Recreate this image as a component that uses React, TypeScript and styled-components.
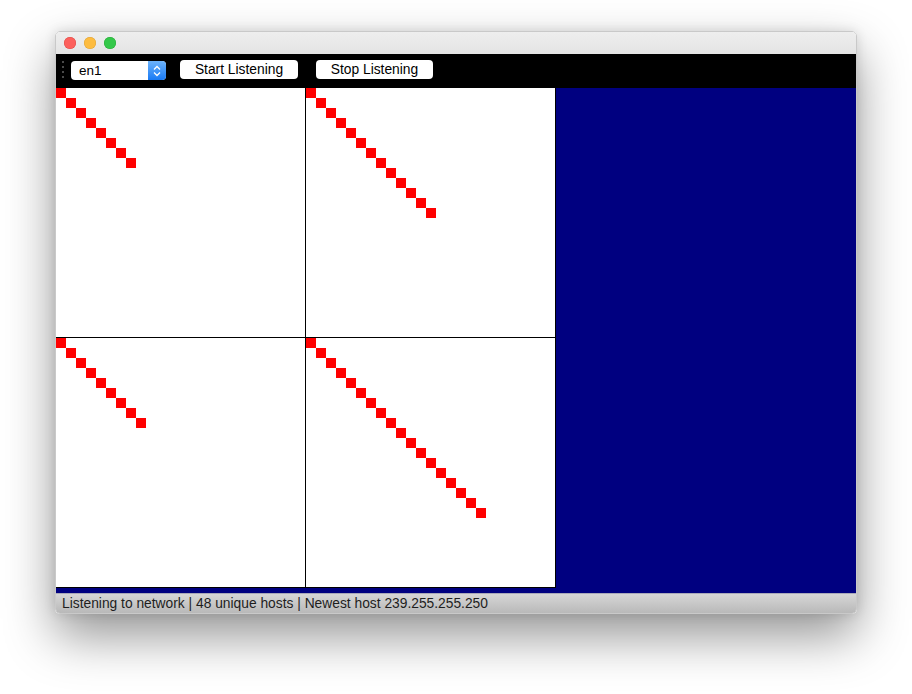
import React from "react";
import styled, { createGlobalStyle } from "styled-components";

const Global = createGlobalStyle`
  html, body { margin: 0; padding: 0; background: #ffffff; }
  body { font-family: "Liberation Sans", Arial, sans-serif; }
`;

const Page = styled.div`
  width: 912px;
  height: 694px;
  padding: 31px 0 0 55px;
  box-sizing: border-box;
  overflow: hidden;
`;

const Window = styled.div`
  width: 802px;
  border: 1px solid #c9c9c9;
  border-radius: 5px;
  overflow: hidden;
  box-sizing: border-box;
  box-shadow: 0 22px 50px rgba(0, 0, 0, 0.42), 0 0 12px rgba(0, 0, 0, 0.12);
  display: flex;
  flex-direction: column;
`;

const TitleBar = styled.div`
  height: 22px;
  background: linear-gradient(#eeeeee, #e4e4e4);
  display: flex;
  align-items: center;
  padding-left: 8px;
  gap: 8px;
`;

const Light = styled.span<{ $fill: string; $edge: string }>`
  width: 12px;
  height: 12px;
  border-radius: 50%;
  background: ${(p) => p.$fill};
  box-shadow: inset 0 0 0 0.5px ${(p) => p.$edge};
`;

const Toolbar = styled.div`
  height: 34px;
  background: #000000;
  display: flex;
  align-items: center;
  padding-left: 6px;
`;

const Grip = styled.div`
  display: flex;
  flex-direction: column;
  gap: 3px;
  margin-top: -3px;
`;

const GripDot = styled.span`
  width: 2px;
  height: 2px;
  background: #4a4a4a;
`;

const Popup = styled.div`
  margin-left: 7px;
  width: 95px;
  height: 19px;
  background: #ffffff;
  border-radius: 4px;
  display: flex;
  align-items: stretch;
  overflow: hidden;
  margin-top: -1px;
`;

const PopupLabel = styled.span`
  flex: 1;
  font-size: 13.5px;
  line-height: 20px;
  padding-left: 8px;
  color: #000;
`;

const Stepper = styled.span`
  width: 18px;
  background: linear-gradient(#6db3fb, #197af4);
  display: flex;
  align-items: center;
  justify-content: center;
`;

const Button = styled.button<{ $w: number; $ml: number }>`
  margin-left: ${(p) => p.$ml}px;
  margin-top: -3px;
  width: ${(p) => p.$w}px;
  height: 19px;
  background: #ffffff;
  border: none;
  border-radius: 4px;
  padding: 0;
  font-family: "Liberation Sans", Arial, sans-serif;
  font-size: 13.8px;
  color: #000;
  line-height: 19px;
`;

const Main = styled.div`
  height: 505px;
  background: #000080;
`;

const Grid = styled.div`
  display: grid;
  grid-template-columns: 250px 250px;
  grid-template-rows: 250px 250px;
`;

const Cell = styled.div`
  background: #ffffff;
  border-right: 1px solid #000;
  border-bottom: 1px solid #000;
  display: grid;
  grid-template-columns: repeat(24, 10px);
  grid-template-rows: repeat(24, 10px);
  overflow: hidden;
`;

const Square = styled.span<{ $i: number }>`
  grid-column: ${(p) => p.$i + 1};
  grid-row: ${(p) => p.$i + 1};
  background: #ff0000;
`;

const StatusBar = styled.div`
  height: 20px;
  background: linear-gradient(#d6d6d6, #b9b9b9);
  border-top: 1px solid #a9a9b9;
  box-sizing: border-box;
  display: flex;
  align-items: center;
  padding-left: 6px;
  font-size: 13.8px;
  color: #1e1e1e;
`;

const counts = [8, 13, 9, 18];

export default function App() {
  return (
    <>
      <Global />
      <Page>
        <Window>
          <TitleBar>
            <Light $fill="#fc605c" $edge="#de4a45" />
            <Light $fill="#fdbc40" $edge="#dea236" />
            <Light $fill="#34c84a" $edge="#27aa35" />
          </TitleBar>
          <Toolbar>
            <Grip>
              <GripDot />
              <GripDot />
              <GripDot />
              <GripDot />
            </Grip>
            <Popup>
              <PopupLabel>en1</PopupLabel>
              <Stepper>
                <svg width="8" height="12" viewBox="0 0 8 12">
                  <path d="M1 4.5 L4 1.5 L7 4.5 M1 7.5 L4 10.5 L7 7.5" fill="none" stroke="#fff" strokeWidth="1.3" />
                </svg>
              </Stepper>
            </Popup>
            <Button $w={118} $ml={14}>Start Listening</Button>
            <Button $w={117} $ml={18}>Stop Listening</Button>
          </Toolbar>
          <Main>
            <Grid>
              {counts.map((n, c) => (
                <Cell key={c}>
                  {Array.from({ length: n }, (_, i) => (
                    <Square key={i} $i={i} />
                  ))}
                </Cell>
              ))}
            </Grid>
          </Main>
          <StatusBar>Listening to network | 48 unique hosts | Newest host 239.255.255.250</StatusBar>
        </Window>
      </Page>
    </>
  );
}
